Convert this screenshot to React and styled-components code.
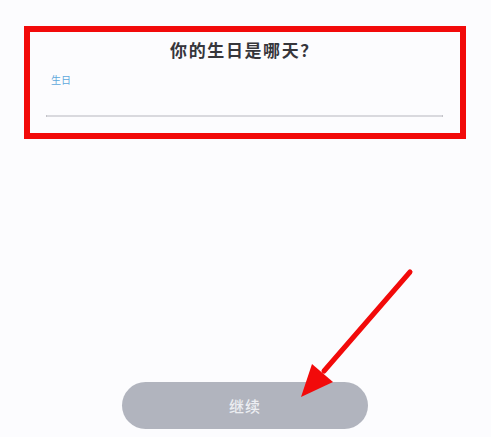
import React from "react";
import styled, { createGlobalStyle } from "styled-components";

/**
 * Page defaults
 */
const GlobalStyle = createGlobalStyle`
  html, body {
    margin: 0;
    padding: 0;
    background: #fcfcfe;
  }
  body {
    font-family: "Noto Sans CJK SC", "Noto Sans", sans-serif;
  }
`;

/**
 * Styles the screen container
 */
const Screen = styled.div`
  position: relative;
  width: 491px;
  height: 437px;
  box-sizing: border-box;
  padding: 26px 25px 8px 24px;
  display: flex;
  flex-direction: column;
  background: #fcfcfe;
  overflow: hidden;
`;

/**
 * Styles the highlighted form panel
 */
const Panel = styled.section`
  box-sizing: border-box;
  width: 442px;
  height: 113px;
  flex-shrink: 0;
  border: 6px solid #f20a0a;
  padding: 6px 17px 0 16px;
  display: flex;
  flex-direction: column;
`;

const Title = styled.h1`
  margin: 0;
  text-align: center;
  font-size: 17px;
  line-height: 24px;
  font-weight: 700;
  color: #36363b;
  letter-spacing: 1.6px;
`;

const Label = styled.label`
  display: block;
  margin: 11px 0 0 5px;
  font-size: 10px;
  line-height: 13px;
  color: #5fa9dc;
`;

const Underline = styled.div`
  margin-top: 29px;
  height: 2px;
  background: #d9d9de;
  border-left: 1px solid #c4c4c9;
  border-right: 1px solid #c4c4c9;
`;

/**
 * Styles the bottom action area
 */
const Footer = styled.div`
  margin-top: auto;
  display: flex;
  justify-content: center;
`;

const ContinueButton = styled.button`
  width: 246px;
  height: 47px;
  border: none;
  border-radius: 24px;
  background: #b1b4be;
  color: #eceef2;
  font-family: inherit;
  font-size: 15px;
  font-weight: 500;
  letter-spacing: 1px;
  cursor: pointer;
`;

const Arrow = styled.svg`
  position: absolute;
  left: 0;
  top: 0;
  pointer-events: none;
`;

const App = () => {
  return (
    <>
      <GlobalStyle />
      <Screen>
        <Panel>
          <Title>你的生日是哪天？</Title>
          <Label>生日</Label>
          <Underline />
        </Panel>
        <Footer>
          <ContinueButton>继续</ContinueButton>
        </Footer>
        <Arrow width="491" height="437" viewBox="0 0 491 437">
          <line
            x1="410"
            y1="272"
            x2="324"
            y2="371"
            stroke="#f20a0a"
            strokeWidth="5"
            strokeLinecap="round"
          />
          <polygon points="301,397 312,364 333,382" fill="#f20a0a" />
        </Arrow>
      </Screen>
    </>
  );
};

export default App;
